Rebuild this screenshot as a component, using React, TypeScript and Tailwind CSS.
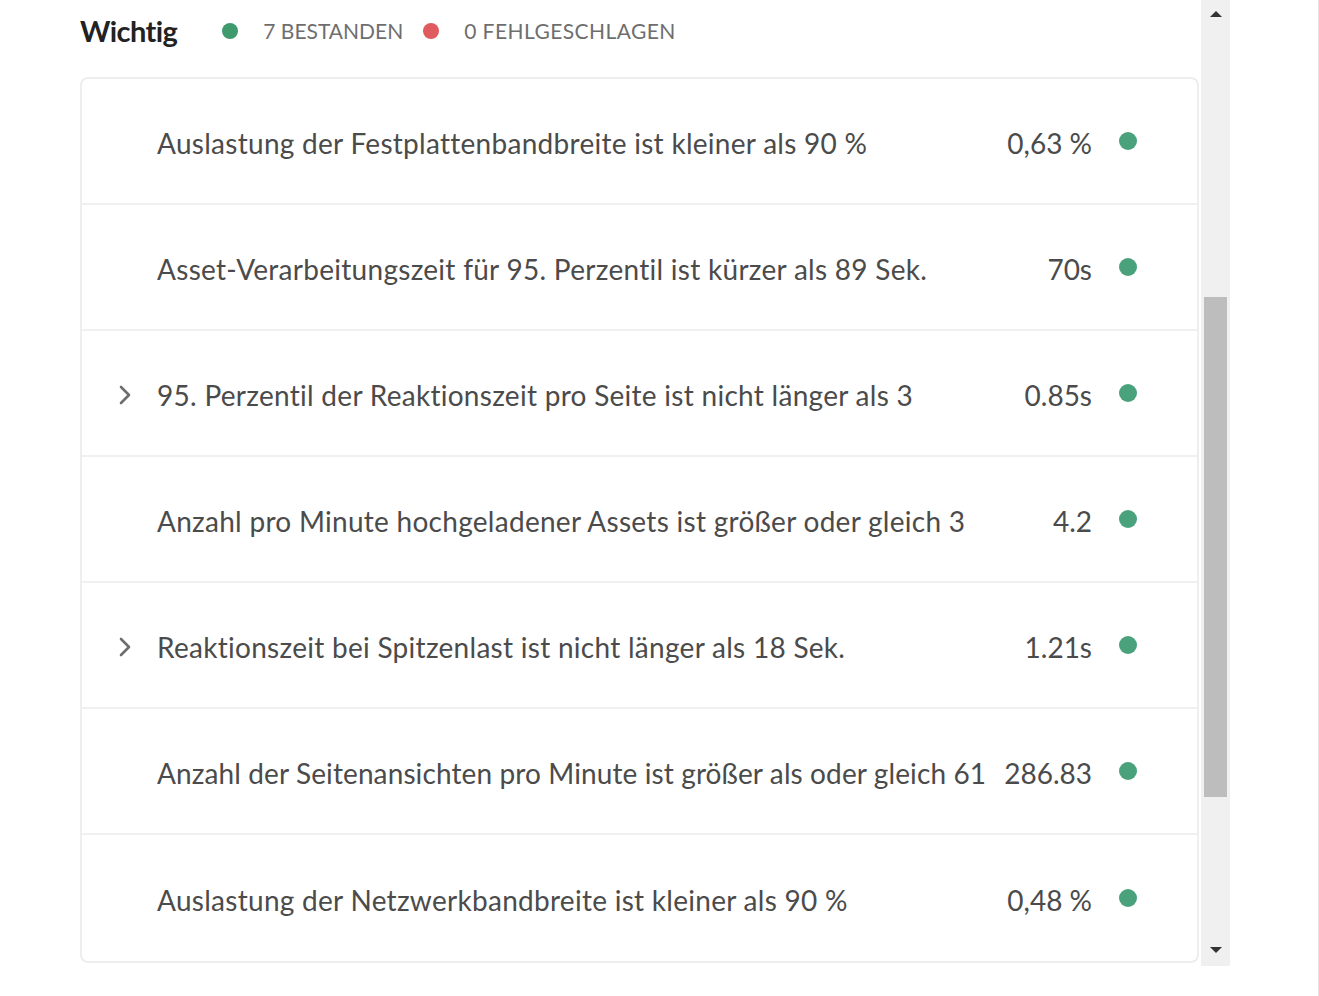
import React from 'react';

type Check = { label: string; value: string; expandable?: boolean; tight?: boolean };

const checks: Check[] = [
  { label: 'Auslastung der Festplattenbandbreite ist kleiner als 90 %', value: '0,63 %' },
  { label: 'Asset-Verarbeitungszeit für 95. Perzentil ist kürzer als 89 Sek.', value: '70s' },
  { label: '95. Perzentil der Reaktionszeit pro Seite ist nicht länger als 3', value: '0.85s', expandable: true },
  { label: 'Anzahl pro Minute hochgeladener Assets ist größer oder gleich 3', value: '4.2' },
  { label: 'Reaktionszeit bei Spitzenlast ist nicht länger als 18 Sek.', value: '1.21s', expandable: true },
  { label: 'Anzahl der Seitenansichten pro Minute ist größer als oder gleich 61', value: '286.83', tight: true },
  { label: 'Auslastung der Netzwerkbandbreite ist kleiner als 90 %', value: '0,48 %' },
];

function Chevron() {
  return (
    <svg width="14" height="22" viewBox="0 0 14 22" fill="none" aria-hidden>
      <path d="M3 3 L11 11 L3 19" stroke="#6e6e6e" strokeWidth="2.6" strokeLinecap="round" strokeLinejoin="round" />
    </svg>
  );
}

function Row({ check, last }: { check: Check; last: boolean }) {
  return (
    <div className={`flex h-[126px] items-center pt-[4px] ${last ? '' : 'border-b-2 border-[#f0f0f0]'}`}>
      <div className="flex w-[75px] shrink-0 justify-end pr-[25px]">
        {check.expandable && <Chevron />}
      </div>
      <div
        className={`flex-1 whitespace-nowrap text-[28px] text-[#4b4b4b] ${
          check.tight ? 'tracking-[0.004em]' : 'tracking-[0.01em]'
        }`}
      >
        {check.label}
      </div>
      <div className="shrink-0 whitespace-nowrap text-right text-[28px] text-[#4b4b4b]">{check.value}</div>
      <div className="flex w-[105px] shrink-0 pl-[27px]">
        <span className="-mt-[4px] h-[18px] w-[18px] rounded-full bg-[#4aa27c]" />
      </div>
    </div>
  );
}

function Scrollbar() {
  return (
    <div className="flex h-[966px] w-[29px] shrink-0 flex-col items-center bg-[#f0f0f0]">
      <div className="flex h-[28px] items-center">
        <span className="h-0 w-0 border-x-[6px] border-b-[6px] border-x-transparent border-b-[#333]" />
      </div>
      <div className="h-[269px]" />
      <div className="h-[500px] w-[23px] bg-[#bdbdbd]" />
      <div className="flex-1" />
      <div className="flex h-[30px] items-center pb-[2px]">
        <span className="h-0 w-0 border-x-[6px] border-t-[6px] border-x-transparent border-t-[#333]" />
      </div>
    </div>
  );
}

export default function App() {
  return (
    <div
      className="flex h-[996px] w-[1319px] overflow-hidden bg-white"
      style={{ fontFamily: 'Lato, "Open Sans", sans-serif' }}
    >
      <div className="w-[1201px] shrink-0 pl-[80px] pr-[2px]">
        <div className="flex h-[77px] items-center pb-[16px]">
          <h2 className="text-[29px] font-bold tracking-[-0.02em] text-[#222]">Wichtig</h2>
          <span className="ml-[45px] h-[16px] w-[16px] rounded-full bg-[#3f9a6e]" />
          <span className="ml-[25px] text-[21px] text-[#6e6e6e]">7 BESTANDEN</span>
          <span className="ml-[20px] h-[16px] w-[16px] rounded-full bg-[#df5b5e]" />
          <span className="ml-[25px] text-[21px] tracking-[0.02em] text-[#6e6e6e]">0 FEHLGESCHLAGEN</span>
        </div>
        <div className="rounded-[8px] border-2 border-[#eeeeee]">
          {checks.map((c, i) => (
            <Row key={c.label} check={c} last={i === checks.length - 1} />
          ))}
        </div>
      </div>
      <Scrollbar />
      <div className="flex-1" />
      <div className="w-px bg-[#e4e4e4]" />
    </div>
  );
}
